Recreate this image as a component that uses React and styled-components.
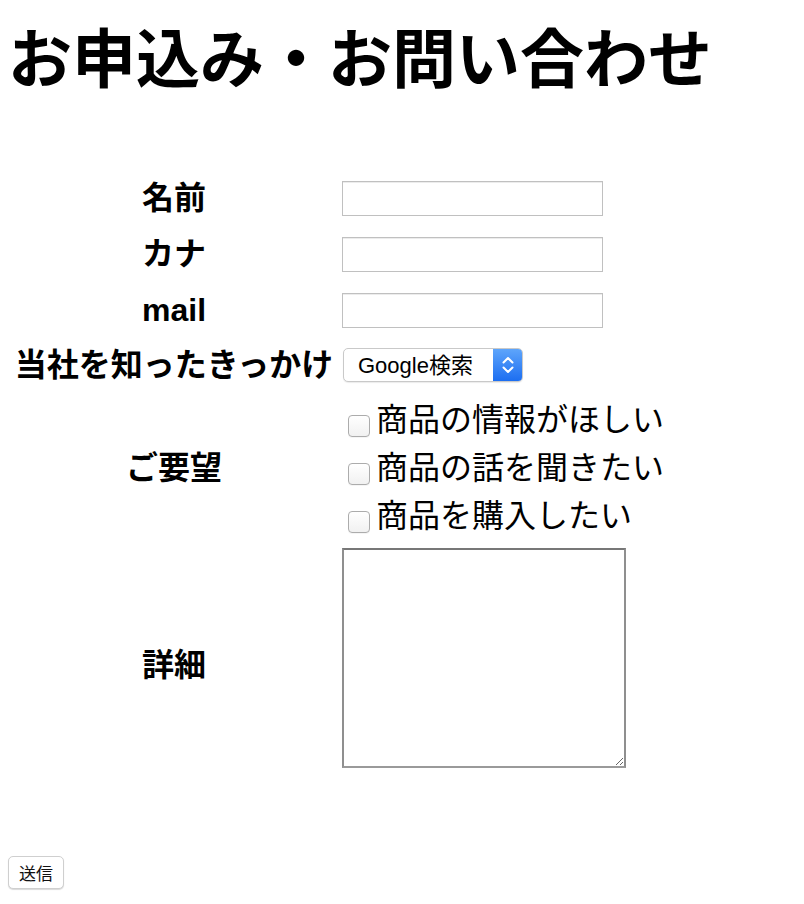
import React from "react";
import styled, { createGlobalStyle } from "styled-components";

const Global = createGlobalStyle`
  html, body { margin: 0; padding: 0; background: #fff; }
  body { font-family: "Liberation Sans", "Noto Sans CJK JP", sans-serif; color: #000; }
`;

const Page = styled.div`
  padding: 8px;
`;

const Title = styled.h1`
  margin: 6px 0 0 0;
  font-size: 64px;
  line-height: 92px;
  font-weight: 700;
  white-space: nowrap;
`;

const Form = styled.form`
  display: grid;
  grid-template-columns: 328px max-content;
  grid-template-rows: 56px 56px 56px 54px 152px 228px;
  column-gap: 4px;
  align-items: center;
  margin: 64px 0 0 2px;
`;

const Label = styled.div`
  font-size: 32px;
  font-weight: 700;
  line-height: 48px;
  text-align: center;
  white-space: nowrap;
  padding-top: ${(p) => p.$shift || 0}px;
`;

const Field = styled.div`
  display: flex;
  align-items: center;
`;

const TextInput = styled.input`
  box-sizing: border-box;
  width: 261px;
  height: 35px;
  margin: 0;
  border: 1px solid #c0c0c0;
  box-shadow: inset 0 1px 0 #ececec;
  background: #fff;
  font-size: 16px;
  padding: 0 4px;
  outline: none;
`;

const SelectBox = styled.div`
  box-sizing: border-box;
  display: flex;
  width: 180px;
  height: 34px;
  margin-left: 1px;
  border: 1px solid #c9c9c9;
  border-radius: 5px;
  overflow: hidden;
  background: #fff;
  box-shadow: 0 1px 1px rgba(0, 0, 0, 0.08);
`;

const NativeSelect = styled.select`
  appearance: none;
  -webkit-appearance: none;
  flex: 1;
  min-width: 0;
  border: none;
  background: transparent;
  font-family: "Liberation Sans", "Noto Sans CJK JP", sans-serif;
  font-size: 22px;
  color: #000;
  padding: 0 0 0 14px;
  margin: 0;
  outline: none;
`;

const SelectArrow = styled.span`
  width: 29px;
  display: flex;
  align-items: center;
  justify-content: center;
  background: linear-gradient(#5ea5fb, #1c6ef1);
`;

const CheckList = styled.div`
  display: flex;
  flex-direction: column;
`;

const CheckRow = styled.label`
  display: flex;
  align-items: center;
  font-size: 32px;
  line-height: 48px;
  white-space: nowrap;
`;

const CheckBox = styled.input.attrs({ type: "checkbox" })`
  appearance: none;
  -webkit-appearance: none;
  box-sizing: border-box;
  width: 22px;
  height: 22px;
  margin: 11px 6px 0 6px;
  border: 1px solid #acacac;
  border-radius: 4px;
  background: linear-gradient(#ffffff, #f1f1f1);
  box-shadow: 0 1px 0 rgba(0, 0, 0, 0.04);
`;

const TextArea = styled.textarea`
  box-sizing: border-box;
  width: 284px;
  height: 220px;
  margin: 0;
  border-style: solid;
  border-width: 2px;
  border-color: #777 #8f8f8f #9a9a9a #8f8f8f;
  background: #fff;
  outline: none;
`;

const SubmitButton = styled.button`
  box-sizing: border-box;
  display: block;
  margin: 84px 0 0 0;
  width: 56px;
  height: 33px;
  padding: 0;
  border: 1px solid #cfcfcf;
  border-radius: 5px;
  background: #fff;
  box-shadow: 0 1px 1px rgba(0, 0, 0, 0.15);
  font-family: "Liberation Sans", "Noto Sans CJK JP", sans-serif;
  font-size: 17px;
  color: #111;
`;

const Chevrons = () => (
  <svg width="14" height="20" viewBox="0 0 14 20" fill="none">
    <path d="M2.5 7.5 L7 3 L11.5 7.5" stroke="#fff" strokeWidth="2" strokeLinecap="round" strokeLinejoin="round" />
    <path d="M2.5 12.5 L7 17 L11.5 12.5" stroke="#fff" strokeWidth="2" strokeLinecap="round" strokeLinejoin="round" />
  </svg>
);

const wishes = ["商品の情報がほしい", "商品の話を聞きたい", "商品を購入したい"];

export default function App() {
  return (
    <Page>
      <Global />
      <Title>お申込み・お問い合わせ</Title>
      <Form onSubmit={(e) => e.preventDefault()}>
        <Label>名前</Label>
        <Field>
          <TextInput type="text" />
        </Field>
        <Label>カナ</Label>
        <Field>
          <TextInput type="text" />
        </Field>
        <Label>mail</Label>
        <Field>
          <TextInput type="text" />
        </Field>
        <Label>当社を知ったきっかけ</Label>
        <Field>
          <SelectBox>
            <NativeSelect defaultValue="google">
              <option value="google">Google検索</option>
            </NativeSelect>
            <SelectArrow>
              <Chevrons />
            </SelectArrow>
          </SelectBox>
        </Field>
        <Label>ご要望</Label>
        <Field>
          <CheckList>
            {wishes.map((w) => (
              <CheckRow key={w}>
                <CheckBox />
                {w}
              </CheckRow>
            ))}
          </CheckList>
        </Field>
        <Label $shift={14}>詳細</Label>
        <Field>
          <TextArea />
        </Field>
      </Form>
      <SubmitButton type="button">送信</SubmitButton>
    </Page>
  );
}
